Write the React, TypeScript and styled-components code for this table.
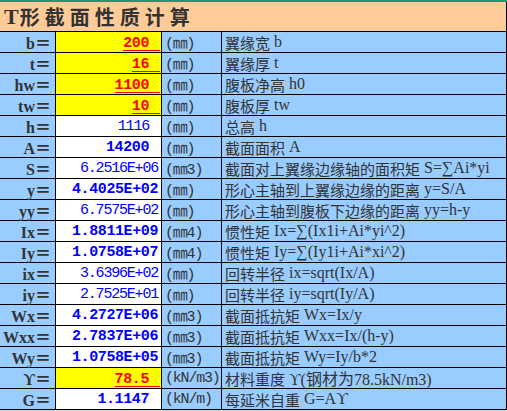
import React from 'react';
import styled, { createGlobalStyle } from 'styled-components';

const GlobalStyle = createGlobalStyle`
  html, body { margin: 0; padding: 0; background: #d4d4d4; }
  body { font-family: "Liberation Serif", "Noto Sans CJK SC", serif; }
`;

const Sheet = styled.div`
  width: 507px;
  border-top: 2px solid #1f9a6c;
`;

const TitleBar = styled.div`
  box-sizing: border-box;
  height: 30px;
  background: #ffcc99;
  border-right: 1px solid #000;
  border-bottom: 1px solid #000;
  display: flex;
  align-items: center;
  padding-left: 4px;
  color: #333;
  font-weight: bold;
`;

const TitleT = styled.span`
  font-family: "Liberation Serif", serif;
  font-size: 22px;
  margin-right: 1px;
`;

const TitleCJK = styled.span`
  font-family: "Noto Sans CJK SC", sans-serif;
  font-size: 20px;
  letter-spacing: 5px;
`;

const Grid = styled.div`
  display: grid;
  grid-template-columns: 55px 105px 59px 284px;
  grid-auto-rows: 20px;
  gap: 1px;
  background: #000;
  border-right: 1px solid #000;
  border-bottom: 1px solid #000;
`;

const LabelCell = styled.div`
  background: #99ccff;
  display: flex;
  align-items: center;
  justify-content: flex-end;
  padding-right: 4px;
  font-family: "Liberation Serif", "Noto Sans CJK SC", serif;
  font-weight: bold;
  font-size: 16px;
  color: #333;
  white-space: nowrap;
`;

const ValueCell = styled.div<{ $input?: boolean; $pad: number; $bold?: boolean }>`
  background: ${(p) => (p.$input ? '#ffff00' : '#ffffff')};
  display: flex;
  align-items: center;
  justify-content: flex-end;
  padding-right: ${(p) => p.$pad}px;
  font-family: "Liberation Mono", monospace;
  font-size: 15px;
  font-weight: ${(p) => (p.$bold ? 'bold' : 'normal')};
  letter-spacing: ${(p) => (p.$bold ? '-0.4px' : '-1.2px')};
  color: ${(p) => (p.$input ? '#ff0000' : '#0000ff')};
  white-space: nowrap;
`;

const Underlined = styled.span`
  display: inline-block;
  line-height: 13px;
  border-bottom: 1px solid #ff0000;
  padding-right: 11px;
  margin-top: 3px;
`;

const UnitCell = styled.div`
  background: #99ccff;
  display: flex;
  align-items: center;
  padding-left: 3px;
  font-family: "Liberation Mono", "Noto Sans CJK SC", monospace;
  font-size: 15px;
  letter-spacing: -1.2px;
  color: #333;
  white-space: nowrap;
`;

const DescCell = styled.div`
  background: #99ccff;
  display: flex;
  align-items: center;
  padding-left: 3px;
  font-size: 15px;
  color: #333;
  white-space: nowrap;
  overflow: hidden;
`;

const Cjk = styled.span`
  font-family: "Noto Sans CJK SC", sans-serif;
`;

const Latin = styled.span`
  font-family: "Liberation Serif", "Noto Sans CJK SC", serif;
  font-size: 16px;
  margin-left: 4px;
`;

type Row = {
  label: string;
  value: string;
  kind: 'input' | 'plain' | 'bold';
  trail?: boolean;
  unit: string;
  cjk: string;
  latin: string;
};

const rows: Row[] = [
  { label: 'b＝', value: '200', kind: 'input', unit: '(㎜)', cjk: '翼缘宽', latin: 'b' },
  { label: 't＝', value: '16', kind: 'input', unit: '(㎜)', cjk: '翼缘厚', latin: 't' },
  { label: 'hw＝', value: '1100', kind: 'input', unit: '(㎜)', cjk: '腹板净高', latin: 'h0' },
  { label: 'tw＝', value: '10', kind: 'input', unit: '(㎜)', cjk: '腹板厚', latin: 'tw' },
  { label: 'h＝', value: '1116', kind: 'plain', trail: true, unit: '(㎜)', cjk: '总高', latin: 'h' },
  { label: 'A＝', value: '14200', kind: 'bold', trail: true, unit: '(㎜)', cjk: '截面面积', latin: 'A' },
  { label: 'S＝', value: '6.2516E+06', kind: 'plain', unit: '(㎜3)', cjk: '截面对上翼缘边缘轴的面积矩', latin: 'S=∑Ai*yi' },
  { label: 'y＝', value: '4.4025E+02', kind: 'bold', unit: '(㎜)', cjk: '形心主轴到上翼缘边缘的距离', latin: 'y=S/A' },
  { label: 'yy＝', value: '6.7575E+02', kind: 'plain', unit: '(㎜)', cjk: '形心主轴到腹板下边缘的距离', latin: 'yy=h-y' },
  { label: 'Ix＝', value: '1.8811E+09', kind: 'bold', unit: '(㎜4)', cjk: '惯性矩', latin: 'Ix=∑(Ix1i+Ai*yi^2)' },
  { label: 'Iy＝', value: '1.0758E+07', kind: 'bold', unit: '(㎜4)', cjk: '惯性矩', latin: 'Iy=∑(Iy1i+Ai*xi^2)' },
  { label: 'ix＝', value: '3.6396E+02', kind: 'plain', unit: '(㎜)', cjk: '回转半径', latin: 'ix=sqrt(Ix/A)' },
  { label: 'iy＝', value: '2.7525E+01', kind: 'plain', unit: '(㎜)', cjk: '回转半径', latin: 'iy=sqrt(Iy/A)' },
  { label: 'Wx＝', value: '4.2727E+06', kind: 'bold', unit: '(㎜3)', cjk: '截面抵抗矩', latin: 'Wx=Ix/y' },
  { label: 'Wxx＝', value: '2.7837E+06', kind: 'bold', unit: '(㎜3)', cjk: '截面抵抗矩', latin: 'Wxx=Ix/(h-y)' },
  { label: 'Wy＝', value: '1.0758E+05', kind: 'bold', unit: '(㎜3)', cjk: '截面抵抗矩', latin: 'Wy=Iy/b*2' },
  { label: 'ϒ＝', value: '78.5', kind: 'input', unit: '(kN/m3)', cjk: '材料重度', latin: 'ϒ(钢材为78.5kN/m3)' },
  { label: 'G＝', value: '1.1147', kind: 'bold', trail: true, unit: '(kN/m)', cjk: '每延米自重', latin: 'G=Aϒ' },
];

export default function App() {
  return (
    <>
      <GlobalStyle />
      <Sheet>
        <TitleBar>
          <TitleT>T</TitleT>
          <TitleCJK>形截面性质计算</TitleCJK>
        </TitleBar>
        <Grid>
          {rows.map((r) => (
            <React.Fragment key={r.label}>
              <LabelCell>{r.label}</LabelCell>
              <ValueCell
                $input={r.kind === 'input'}
                $bold={r.kind !== 'plain'}
                $pad={r.kind === 'input' ? 1 : r.trail ? 12 : 3}
              >
                {r.kind === 'input' ? <Underlined>{r.value}</Underlined> : r.value}
              </ValueCell>
              <UnitCell>{r.unit}</UnitCell>
              <DescCell>
                <Cjk>{r.cjk}</Cjk>
                <Latin>{r.latin}</Latin>
              </DescCell>
            </React.Fragment>
          ))}
        </Grid>
      </Sheet>
    </>
  );
}
